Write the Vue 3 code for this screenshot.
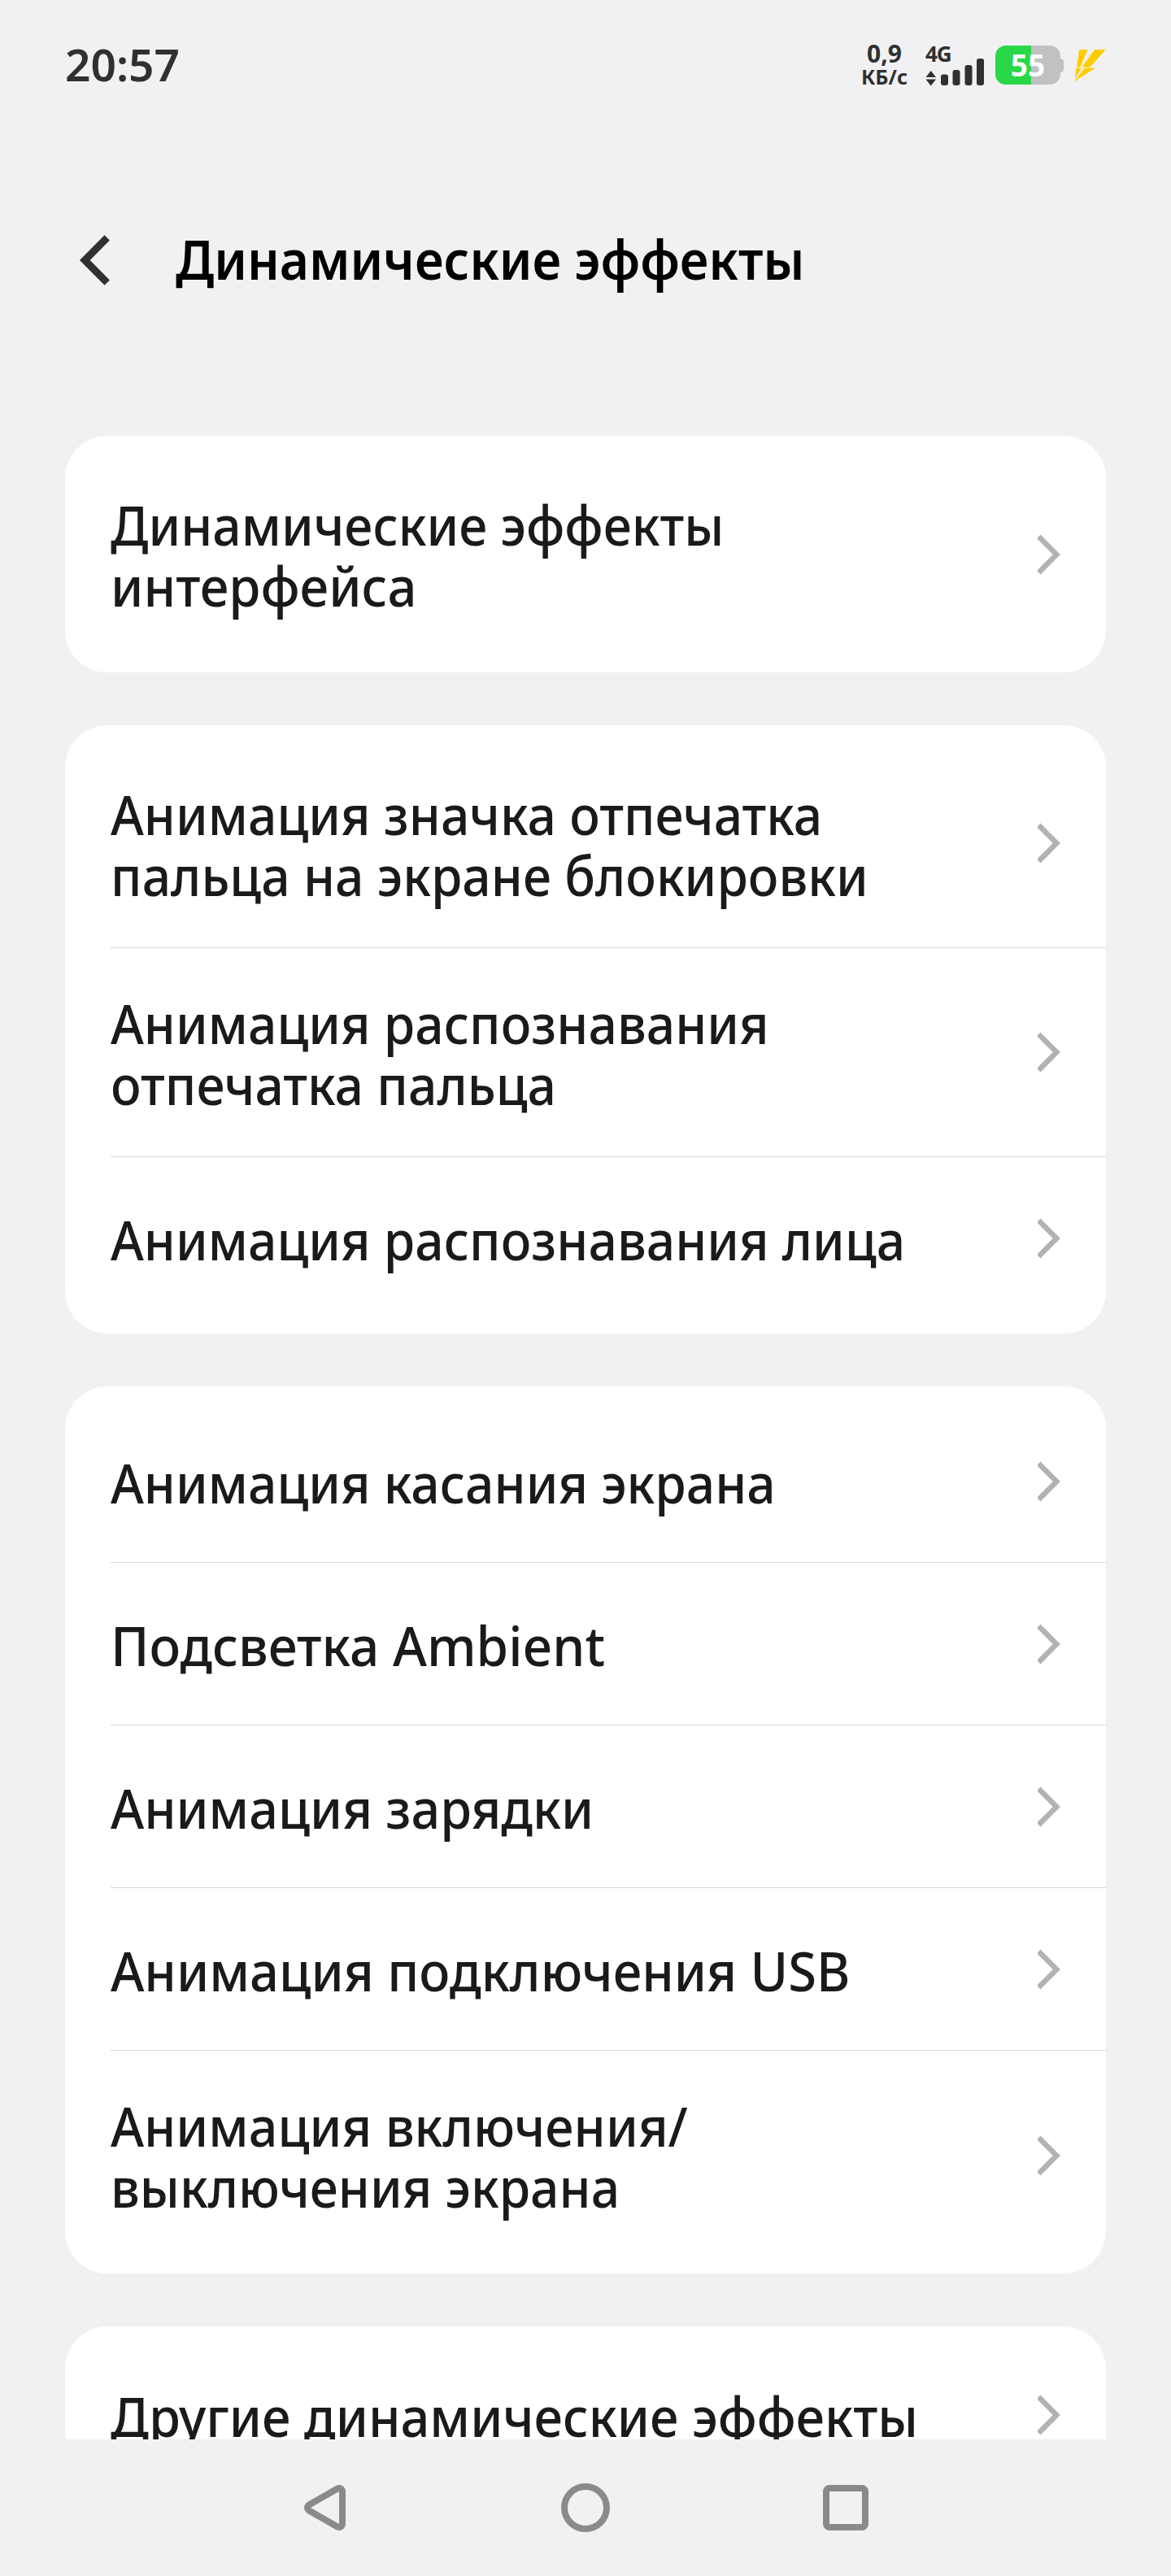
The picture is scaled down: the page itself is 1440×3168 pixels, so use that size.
<template>
  <div class="screen">
    <header class="statusbar">
      <span class="clock">20:57</span>
      <div class="indicators">
        <div class="speed">
          <span class="speed-value">0,9</span>
          <span class="speed-unit">КБ/с</span>
        </div>
        <div class="network">
          <span class="network-type">4G</span>
          <svg class="signal" width="73" height="34" viewBox="0 0 73 34">
            <path d="M0.500 23 L6.700 15 L13 23 Z M0.500 25.500 L6.700 33.500 L13 25.500 Z" />
            <rect x="19" y="19.500" width="9" height="13.500" rx="3" />
            <rect x="33.500" y="14" width="9" height="19" rx="3" />
            <rect x="48.500" y="8" width="9" height="25" rx="3" />
            <rect x="63" y="0" width="9" height="33" rx="3" />
          </svg>
        </div>
        <div class="battery">
          <div class="battery-body">
            <div class="battery-level" :style="{ width: battery + '%' }"></div>
            <span class="battery-text">{{ battery }}</span>
          </div>
          <div class="battery-cap"></div>
        </div>
        <svg class="bolt" width="40" height="40" viewBox="0 0 40 40">
          <path d="M7.200 0 H17.500 L8.500 21.500 H4 Z" />
          <path d="M26 0 H39.700 L20.500 21.500 H10.500 Z" />
          <path d="M3.300 22.500 H10 L1.800 36 Z" />
          <path d="M14 22.500 H27.300 L0.500 39.500 Z" />
        </svg>
      </div>
    </header>

    <div class="titlebar">
      <svg class="back" width="44" height="64" viewBox="0 0 44 64">
        <path d="M39.700 4.300 L12.300 32 L39.700 59.700" />
      </svg>
      <h1>Динамические эффекты</h1>
    </div>

    <main class="content">
      <section v-for="(group, i) in groups" :key="i" class="card">
        <div v-for="item in group" :key="item[0]" class="row" :class="{ tall: item.length > 1 }">
          <div class="label">
            <div v-for="line in item" :key="line" class="line" :style="{ transform: `scaleX(${lineScale(line)})` }">{{ line }}</div>
          </div>
          <svg class="chevron" width="28" height="50" viewBox="0 0 28 50">
            <path d="M1.200 2.900 L23.300 25 L1.200 47.100" />
          </svg>
        </div>
      </section>
    </main>

    <nav class="navbar">
      <svg width="64" height="64" viewBox="0 0 64 64">
        <path class="nav-back" d="M14 32 L49 12 V52 Z" />
      </svg>
      <svg width="64" height="64" viewBox="0 0 64 64">
        <circle cx="32" cy="32" r="26" />
      </svg>
      <svg width="64" height="64" viewBox="0 0 64 64">
        <rect x="8" y="8" width="48" height="48" rx="4" />
      </svg>
    </nav>
  </div>
</template>

<script setup>
import { ref } from 'vue';

const battery = ref(55);

// каждый пункт — массив строк подписи
const groups = [
  [['Динамические эффекты', 'интерфейса']],
  [
    ['Анимация значка отпечатка', 'пальца на экране блокировки'],
    ['Анимация распознавания', 'отпечатка пальца'],
    ['Анимация распознавания лица'],
  ],
  [
    ['Анимация касания экрана'],
    ['Подсветка Ambient'],
    ['Анимация зарядки'],
    ['Анимация подключения USB'],
    ['Анимация включения/', 'выключения экрана'],
  ],
  [['Другие динамические эффекты']],
];

// подписи слегка сужены, для отдельных строк — меньше
const scales = {
  'интерфейса': 0.947,
  'Подсветка Ambient': 0.956,
  'Анимация зарядки': 0.939,
  'Анимация подключения USB': 0.944,
  'Анимация включения/': 0.937,
  'Другие динамические эффекты': 0.943,
};

const lineScale = (line) => scales[line] || 0.932;
</script>

<style>
body {
  margin: 0;
  background: #f1f1f3;
}
</style>

<style scoped>
.screen {
  display: flex;
  flex-direction: column;
  width: 1440px;
  height: 3168px;
  overflow: hidden;
  background: #f1f1f3;
  font-family: "Noto Sans", sans-serif;
  font-weight: 500;
  color: #1a1a1a;
}

.statusbar {
  display: flex;
  flex: none;
  justify-content: space-between;
  align-items: flex-start;
  box-sizing: border-box;
  height: 160px;
  padding: 50px 80px 0;
  color: #303030;
}

.clock {
  margin-top: -1px;
  font-size: 55px;
  font-weight: 600;
  line-height: 60px;
}

.indicators {
  display: flex;
  align-items: flex-start;
}

.speed {
  display: flex;
  flex-direction: column;
  align-items: center;
  margin: 1px 22px 0 0;
  font-weight: 700;
}

.speed-value {
  font-size: 30px;
  line-height: 30px;
}

.speed-unit {
  font-size: 25px;
  line-height: 27px;
}

.network {
  display: flex;
  flex-direction: column;
  width: 73px;
  margin-right: 13px;
}

.network-type {
  height: 22px;
  font-size: 26px;
  line-height: 32px;
  font-weight: 700;
  letter-spacing: -1px;
}

.signal {
  fill: #303030;
}

.battery {
  display: flex;
  align-items: center;
  margin: 6px 12px 0 0;
}

.battery-body {
  position: relative;
  width: 80px;
  height: 48px;
  overflow: hidden;
  border-radius: 13px;
  background: #c1c1c3;
}

.battery-level {
  height: 100%;
  background: #29d848;
}

.battery-text {
  position: absolute;
  inset: 0;
  color: #fff;
  font-size: 37px;
  font-weight: 700;
  line-height: 47px;
  text-align: center;
}

.battery-cap {
  width: 4px;
  height: 17px;
  border-radius: 0 4px 4px 0;
  background: #c1c1c3;
}

.bolt {
  margin-top: 11px;
  fill: #ffcc00;
}

.titlebar {
  display: flex;
  flex: none;
  align-items: center;
  height: 320px;
  padding: 0 92px;
  gap: 80px;
}

.back {
  fill: none;
  stroke: #303030;
  stroke-width: 9;
}

h1 {
  margin: -4px 0 0;
  color: #000;
  font-size: 67px;
  font-weight: 600;
  line-height: 80px;
  transform: scaleX(0.93);
  transform-origin: left;
}

.content {
  display: flex;
  flex: 1;
  flex-direction: column;
  gap: 65px;
  min-height: 0;
  overflow: hidden;
  padding: 56px 80px 0;
}

.card {
  flex: none;
  padding: 17px 0;
  border-radius: 52px;
  background: #fff;
}

.card:last-child {
  padding-top: 9px;
}

.row {
  display: flex;
  align-items: center;
  justify-content: space-between;
  box-sizing: border-box;
  height: 200px;
  margin-left: 56px;
  padding-right: 56px;
  border-bottom: 1px solid #d9d9d9;
}

.row.tall {
  height: 257px;
}

.row:last-child {
  border-bottom: none;
}

.label {
  padding-top: 3px;
  font-size: 67px;
  line-height: 75px;
  white-space: nowrap;
}

.line {
  transform-origin: left;
}

.chevron {
  flex: none;
  fill: none;
  stroke: #b2b2b2;
  stroke-width: 6.6;
}

.navbar {
  display: flex;
  flex: none;
  align-items: center;
  justify-content: center;
  gap: 256px;
  height: 168px;
}

.navbar svg {
  fill: none;
  stroke: #8a8a8a;
  stroke-width: 8;
}

/* обводка под заливкой: снаружи скруглена, внутри острые углы */
.navbar .nav-back {
  fill: #f1f1f3;
  stroke-width: 16;
  stroke-linejoin: round;
  paint-order: stroke;
}
</style>
